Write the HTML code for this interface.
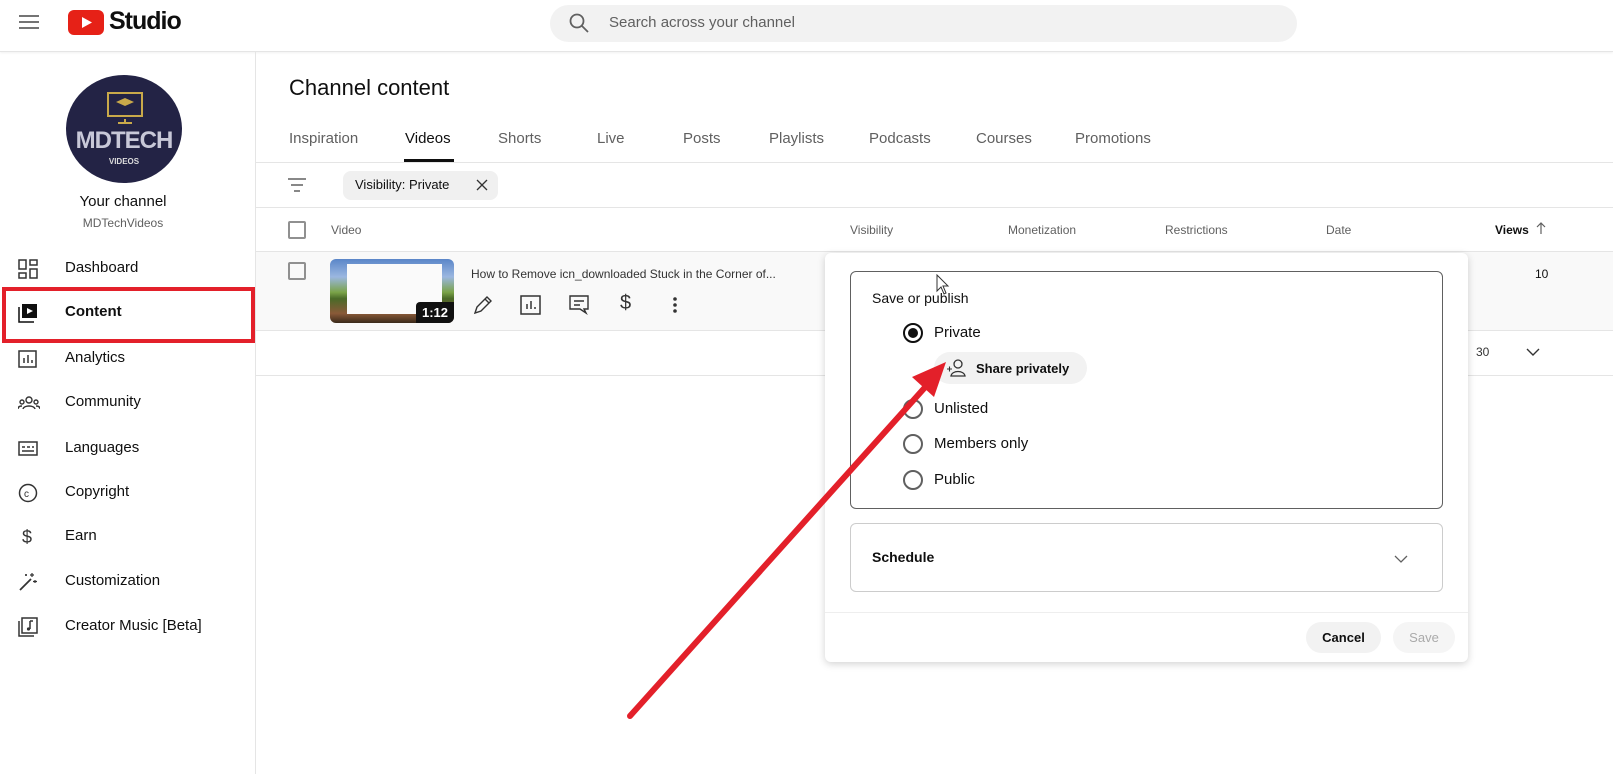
<!DOCTYPE html>
<html><head><meta charset="utf-8"><style>
*{box-sizing:border-box;margin:0;padding:0}
body{width:1613px;height:774px;overflow:hidden;background:#fff;font-family:"Liberation Sans",Arial,sans-serif;color:#0f0f0f;position:relative}
.abs{position:absolute}
.hdr{left:0;top:0;width:1613px;height:52px;border-bottom:1px solid #e5e5e5;box-shadow:0 1px 2px rgba(0,0,0,.06)}
.side{left:0;top:52px;width:256px;height:722px;border-right:1px solid #e5e5e5}
.nav{position:absolute;left:18px;font-size:15px;color:#0f0f0f}
.nav svg{position:absolute;left:0;top:0}
.nav span{position:absolute;left:47px;top:0;white-space:nowrap}
.tab{position:absolute;top:130px;font-size:15px;color:#606060}
.th{position:absolute;top:223px;font-size:12px;color:#606060}
.cb{position:absolute;width:18px;height:18px;border:2px solid #909090;border-radius:2px}
.radio{position:absolute;width:20px;height:20px;border:2px solid #606060;border-radius:50%}
.rl{position:absolute;font-size:15px;color:#0f0f0f}
</style></head><body>
<div class="abs hdr"></div>
<svg class="abs" style="left:19px;top:14px" width="20" height="16"><path d="M0 2h20M0 8h20M0 14h20" stroke="#606060" stroke-width="1.8"/></svg>
<svg class="abs" style="left:68px;top:10px" width="36" height="25"><rect width="36" height="25" rx="6" fill="#e62117"/><path d="M14 7l10 5.5-10 5.5z" fill="#fff"/></svg>
<div class="abs" style="left:109px;top:7px;font-size:25px;font-weight:bold;letter-spacing:-1px">Studio</div>
<div class="abs" style="left:550px;top:5px;width:747px;height:37px;background:#f2f2f2;border-radius:19px"></div>
<svg class="abs" style="left:569px;top:13px" width="20" height="20"><circle cx="8" cy="8" r="6.5" stroke="#606060" stroke-width="1.8" fill="none"/><path d="M13 13l6 6" stroke="#606060" stroke-width="1.8"/></svg>
<div class="abs" style="left:609px;top:14px;font-size:15px;color:#606060">Search across your channel</div>

<div class="abs side"></div>
<div class="abs" style="left:66px;top:75px;width:116px;height:108px;border-radius:50%;background:#232345;overflow:hidden">
<svg style="position:absolute;left:40px;top:17px" width="38" height="32"><rect x="2" y="1" width="34" height="23" fill="none" stroke="#c9a94a" stroke-width="2"/><path d="M19 27v3M12 31h14" stroke="#c9a94a" stroke-width="2"/><path d="M10 10l9-4 9 4-9 4z" fill="#c9a94a"/></svg>
<div style="position:absolute;left:-4px;top:52px;width:124px;text-align:center;font-size:24px;font-weight:bold;color:#c8c8d8;letter-spacing:-1px">MDTECH</div>
<div style="position:absolute;left:0;top:82px;width:116px;text-align:center;font-size:8px;color:#ddd;font-weight:bold">VIDEOS</div>
</div>
<div class="abs" style="left:0;top:193px;width:246px;text-align:center;font-size:15px">Your channel</div>
<div class="abs" style="left:0;top:216px;width:246px;text-align:center;font-size:12px;color:#606060">MDTechVideos</div>

<div class="nav" style="top:259px"><svg width="20" height="20"><g fill="none" stroke="#333" stroke-width="1.5"><rect x="1" y="1" width="7" height="9"/><rect x="12" y="1" width="7" height="5"/><rect x="1" y="14" width="7" height="5"/><rect x="12" y="10" width="7" height="9"/></g></svg><span>Dashboard</span></div>
<div class="abs" style="left:2px;top:287px;width:253px;height:56px;border:4px solid #e3202a"></div>
<div class="nav" style="top:303px"><svg width="20" height="20"><rect x="4" y="1" width="15" height="14" fill="#0f0f0f"/><path d="M9 5l6 3-6 3z" fill="#fff"/><path d="M1 4v15h15" stroke="#0f0f0f" stroke-width="1.5" fill="none"/></svg><span style="font-weight:bold">Content</span></div>
<div class="nav" style="top:349px"><svg width="20" height="20"><rect x="1" y="2" width="17" height="16" fill="none" stroke="#333" stroke-width="1.5"/><path d="M6 14V9M10 14V6M14 14v-3" stroke="#333" stroke-width="1.5"/></svg><span>Analytics</span></div>
<div class="nav" style="top:393px"><svg width="22" height="20"><g fill="none" stroke="#333" stroke-width="1.4"><circle cx="11" cy="7" r="3"/><circle cx="4" cy="9" r="2"/><circle cx="18" cy="9" r="2"/><path d="M5 16c1-4 11-4 12 0M0 16c0-3 3-3 4-3M22 16c0-3-3-3-4-3"/></g></svg><span>Community</span></div>
<div class="nav" style="top:439px"><svg width="20" height="20"><rect x="1" y="3" width="18" height="13" fill="none" stroke="#333" stroke-width="1.5"/><path d="M4 8h3M9 8h3M14 8h2M4 12h12" stroke="#333" stroke-width="1.5"/></svg><span>Languages</span></div>
<div class="nav" style="top:483px"><svg width="20" height="20"><circle cx="10" cy="10" r="8.5" fill="none" stroke="#333" stroke-width="1.5"/><text x="6" y="14" font-size="10" font-family="Liberation Sans" fill="#333">c</text></svg><span>Copyright</span></div>
<div class="nav" style="top:527px"><svg width="20" height="20"><text x="4" y="16" font-size="18" font-family="Liberation Sans" fill="#333">$</text></svg><span>Earn</span></div>
<div class="nav" style="top:572px"><svg width="20" height="20"><path d="M2 18L13 7" stroke="#333" stroke-width="1.8"/><path d="M14 1v4M12 3h4M17 8v3M19 9.5h-4M8 2v2M7 3h2" stroke="#333" stroke-width="1.2"/></svg><span>Customization</span></div>
<div class="nav" style="top:617px"><svg width="20" height="20"><rect x="4" y="1" width="15" height="15" fill="none" stroke="#333" stroke-width="1.5"/><path d="M1 4v15h15" stroke="#333" stroke-width="1.5" fill="none"/><path d="M12 4v8M12 4h3" stroke="#333" stroke-width="1.5"/><circle cx="10.5" cy="12" r="1.6" fill="#333"/></svg><span>Creator Music [Beta]</span></div>

<div class="abs" style="left:289px;top:75px;font-size:22px">Channel content</div>
<div class="tab" style="left:289px">Inspiration</div>
<div class="tab" style="left:405px;color:#0f0f0f">Videos</div>
<div class="abs" style="left:404px;top:159px;width:50px;height:3px;background:#0f0f0f"></div>
<div class="tab" style="left:498px">Shorts</div>
<div class="tab" style="left:597px">Live</div>
<div class="tab" style="left:683px">Posts</div>
<div class="tab" style="left:769px">Playlists</div>
<div class="tab" style="left:869px">Podcasts</div>
<div class="tab" style="left:976px">Courses</div>
<div class="tab" style="left:1075px">Promotions</div>
<div class="abs" style="left:256px;top:162px;width:1357px;height:1px;background:#e5e5e5"></div>
<svg class="abs" style="left:288px;top:178px" width="18" height="14"><path d="M0 1h18M3 7h12M6 13h6" stroke="#606060" stroke-width="1.5"/></svg>
<div class="abs" style="left:343px;top:171px;width:155px;height:29px;background:#f0f0f0;border-radius:8px"></div>
<div class="abs" style="left:355px;top:177px;font-size:13px">Visibility: Private</div>
<svg class="abs" style="left:476px;top:179px" width="12" height="12"><path d="M1 1l10 10M11 1L1 11" stroke="#333" stroke-width="1.3"/></svg>
<div class="abs" style="left:256px;top:207px;width:1357px;height:1px;background:#e5e5e5"></div>
<div class="cb" style="left:288px;top:221px"></div>
<div class="th" style="left:331px">Video</div>
<div class="th" style="left:850px">Visibility</div>
<div class="th" style="left:1008px">Monetization</div>
<div class="th" style="left:1165px">Restrictions</div>
<div class="th" style="left:1326px">Date</div>
<div class="th" style="left:1495px;color:#0f0f0f;font-weight:bold">Views</div>
<svg class="abs" style="left:1536px;top:222px" width="10" height="13"><path d="M5 12V1M1 5l4-4 4 4" stroke="#606060" stroke-width="1.2" fill="none"/></svg>
<div class="abs" style="left:256px;top:251px;width:1357px;height:80px;background:#f9f9f9;border-top:1px solid #e5e5e5;border-bottom:1px solid #e5e5e5"></div>
<div class="cb" style="left:288px;top:262px"></div>
<div class="abs" style="left:330px;top:259px;width:124px;height:64px;border-radius:6px;overflow:hidden;background:linear-gradient(#5a86c8 0%,#9bb7e0 28%,#7aa348 52%,#4a6a28 62%,#8a5a38 85%,#3a2a1a 100%)">
<div style="position:absolute;left:17px;top:5px;width:95px;height:50px;background:#fafafa"></div>
<div style="position:absolute;left:86px;top:43px;width:38px;height:21px;background:#111;border-radius:4px 0 0 0;color:#fff;font-size:13px;font-weight:bold;text-align:center;line-height:21px">1:12</div>
</div>
<div class="abs" style="left:471px;top:267px;font-size:12px;color:#333">How to Remove icn_downloaded Stuck in the Corner of...</div>
<svg class="abs" style="left:473px;top:295px" width="20" height="20"><path d="M2 18l2-6L14 2l4 4L8 16z M12 4l4 4" fill="none" stroke="#333" stroke-width="1.4"/></svg>
<svg class="abs" style="left:520px;top:295px" width="22" height="20"><rect x="1" y="1" width="19" height="18" fill="none" stroke="#333" stroke-width="1.5"/><path d="M7 14V9M11 14V6M15 14v-2" stroke="#333" stroke-width="1.5"/></svg>
<svg class="abs" style="left:569px;top:295px" width="20" height="20"><path d="M1 1h18v13h-4l2 4-6-4H1z" fill="none" stroke="#333" stroke-width="1.4"/><path d="M5 6h10M5 10h6" stroke="#333" stroke-width="1.4"/></svg>
<div class="abs" style="left:620px;top:292px;font-size:20px;color:#333">$</div>
<svg class="abs" style="left:672px;top:296px" width="6" height="18"><circle cx="3" cy="3" r="1.8" fill="#333"/><circle cx="3" cy="9" r="1.8" fill="#333"/><circle cx="3" cy="15" r="1.8" fill="#333"/></svg>
<div class="abs" style="left:1535px;top:267px;font-size:12px">10</div>
<div class="abs" style="left:256px;top:375px;width:1357px;height:1px;background:#e5e5e5"></div>
<div class="abs" style="left:1476px;top:345px;font-size:12px;color:#333">30</div>
<svg class="abs" style="left:1526px;top:348px" width="14" height="9"><path d="M1 1l6 6 6-6" stroke="#333" stroke-width="1.4" fill="none"/></svg>

<div class="abs" style="left:825px;top:253px;width:643px;height:409px;background:#fff;border-radius:6px;box-shadow:0 2px 8px rgba(0,0,0,.18)"></div>
<div class="abs" style="left:850px;top:271px;width:593px;height:238px;border:1.5px solid #606060;border-radius:6px"></div>
<div class="abs" style="left:872px;top:290px;font-size:14px">Save or publish</div>
<div class="radio" style="left:903px;top:323px;border-color:#0f0f0f"><div style="position:absolute;left:3px;top:3px;width:10px;height:10px;border-radius:50%;background:#0f0f0f"></div></div>
<div class="rl" style="left:934px;top:324px">Private</div>
<div class="abs" style="left:934px;top:352px;width:153px;height:32px;background:#f2f2f2;border-radius:16px"></div>
<svg class="abs" style="left:946px;top:359px" width="22" height="18"><circle cx="12" cy="5" r="4" fill="none" stroke="#333" stroke-width="1.3"/><path d="M5 17c1-6 13-6 14 0z" fill="none" stroke="#333" stroke-width="1.3"/><path d="M1 10h5M3.5 7.5v5" stroke="#333" stroke-width="1.1"/></svg>
<div class="abs" style="left:976px;top:361px;font-size:13px;font-weight:bold">Share privately</div>
<div class="radio" style="left:903px;top:399px"></div><div class="rl" style="left:934px;top:400px">Unlisted</div>
<div class="radio" style="left:903px;top:434px"></div><div class="rl" style="left:934px;top:435px">Members only</div>
<div class="radio" style="left:903px;top:470px"></div><div class="rl" style="left:934px;top:471px">Public</div>
<div class="abs" style="left:850px;top:523px;width:593px;height:69px;border:1px solid #ccc;border-radius:6px"></div>
<div class="abs" style="left:872px;top:549px;font-size:14px;font-weight:bold">Schedule</div>
<svg class="abs" style="left:1394px;top:555px" width="14" height="9"><path d="M1 1l6 6 6-6" stroke="#606060" stroke-width="1.3" fill="none"/></svg>
<div class="abs" style="left:825px;top:612px;width:643px;height:1px;background:#eee"></div>
<div class="abs" style="left:1306px;top:622px;width:75px;height:31px;background:#f2f2f2;border-radius:16px;font-size:13px;font-weight:bold;text-align:center;line-height:31px">Cancel</div>
<div class="abs" style="left:1393px;top:622px;width:62px;height:31px;background:#f5f5f5;border-radius:16px;font-size:13px;color:#aaa;text-align:center;line-height:31px">Save</div>
<svg class="abs" style="left:936px;top:274px" width="14" height="22"><path d="M1 1v16l4-4 3 7 2-1-3-7h5z" fill="#fff" stroke="#333" stroke-width="1"/></svg>

<svg class="abs" style="left:0;top:0" width="1613" height="774"><path d="M630 716L928 384" stroke="#e3202a" stroke-width="6" stroke-linecap="round"/><path d="M946 362L912 377L934 397z" fill="#e3202a"/></svg>
</body></html>
